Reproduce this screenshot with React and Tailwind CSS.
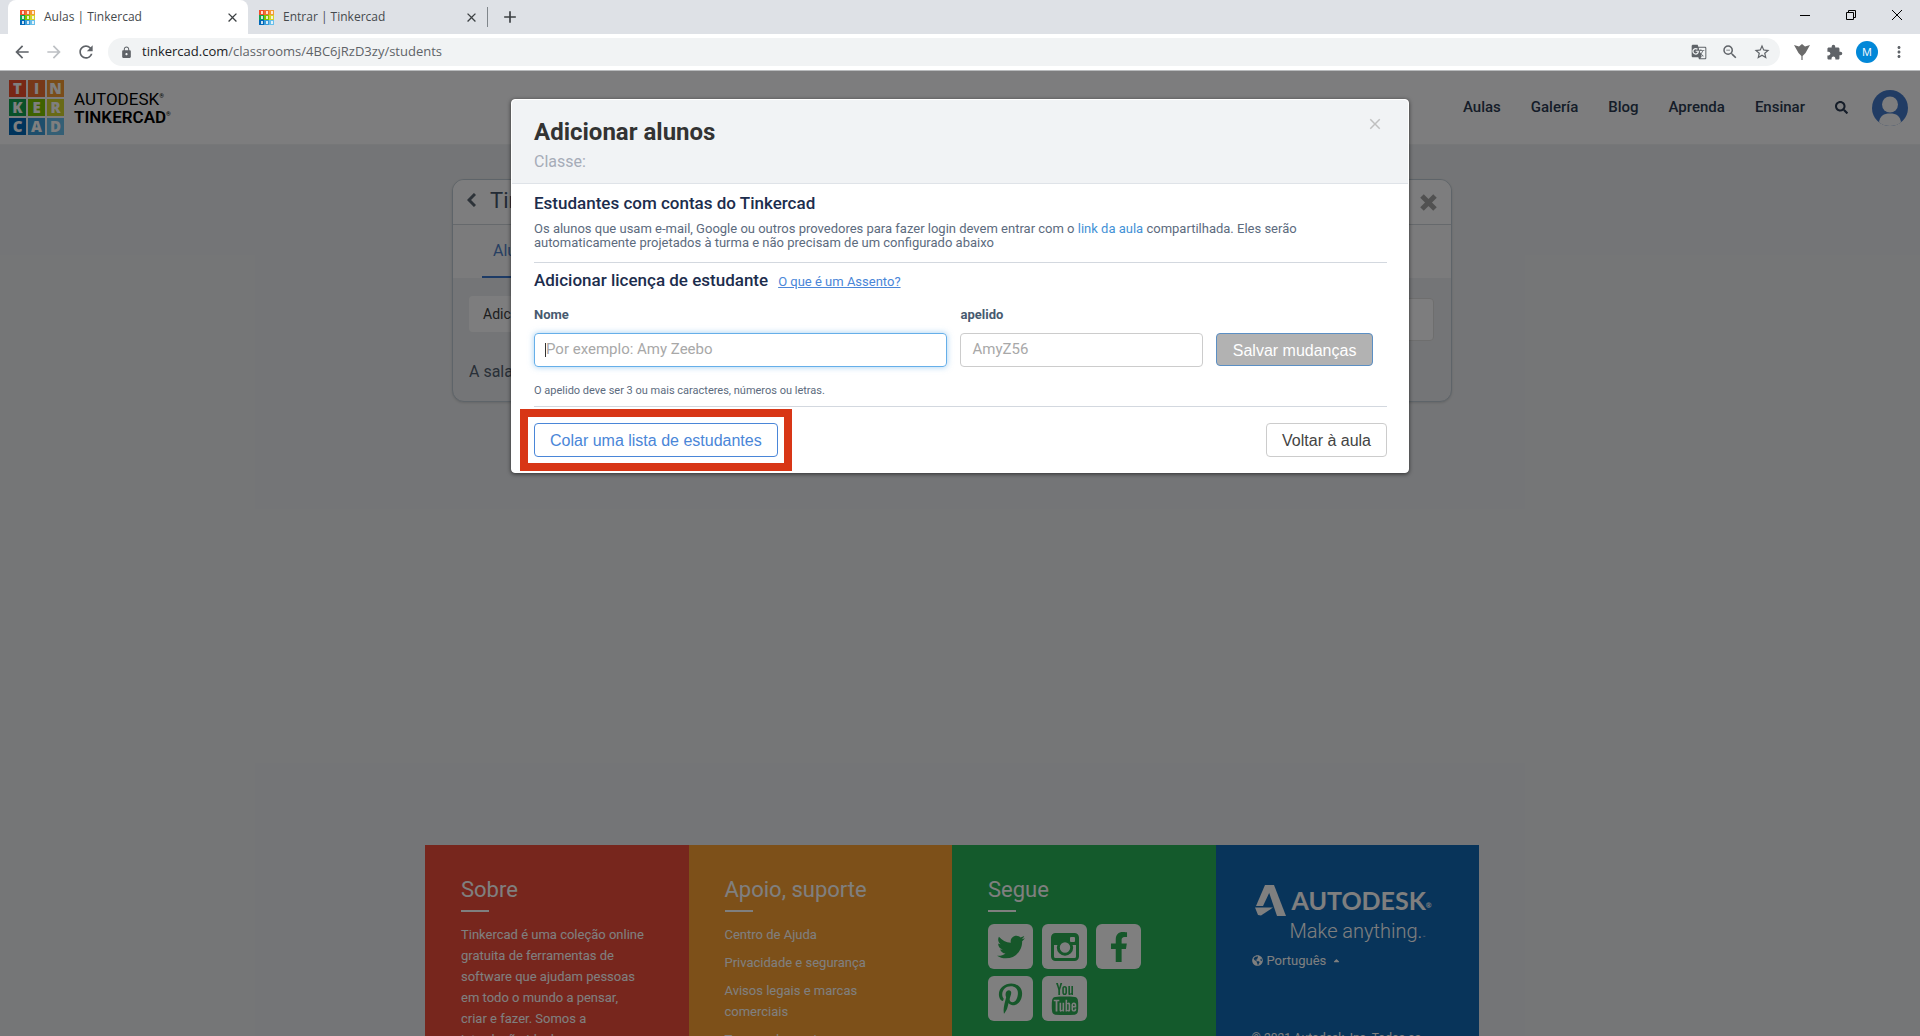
import React, { useState } from "react";
import {
  MdArrowBack,
  MdArrowForward,
  MdRefresh,
  MdLock,
  MdGTranslate,
  MdZoomOut,
  MdStarBorder,
  MdExtension,
  MdMoreVert,
  MdClose,
  MdAdd,
} from "react-icons/md";
import {
  FaSearch,
  FaTwitter,
  FaFacebookF,
  FaPinterestP,
  FaGlobeAmericas,
  FaCaretUp,
} from "react-icons/fa";
import { TfiYoutube } from "react-icons/tfi";

const TILES = [
  ["T", "bg-[#f04e2a]"],
  ["I", "bg-[#ee7030]"],
  ["N", "bg-[#f49a32]"],
  ["K", "bg-[#12a252]"],
  ["E", "bg-[#7fc400]"],
  ["R", "bg-[#d3d42c]"],
  ["C", "bg-[#0068b8]"],
  ["A", "bg-[#3a9cd8]"],
  ["D", "bg-[#68bfea]"],
];

const NAV = ["Aulas", "Galería", "Blog", "Aprenda", "Ensinar"];

function Favicon() {
  return (
    <span className="grid grid-cols-3 w-[15px] shrink-0">
      {TILES.map(([letter, bg]) => (
        <span key={letter + bg} className={`${bg} h-[5px] flex items-center justify-center`}>
          <span className="w-[2px] h-[3px] bg-white/80" />
        </span>
      ))}
    </span>
  );
}

function Logo() {
  return (
    <a href="#" className="flex items-center gap-[10px] text-black">
      <span className="grid grid-cols-[17px_17px_17px] gap-[2px]">
        {TILES.map(([letter, bg]) => (
          <span
            key={letter + bg}
            className={`${bg} h-[17px] flex items-center justify-center text-white font-['Open_Sans'] font-extrabold text-[15px] leading-none`}
          >
            {letter}
          </span>
        ))}
      </span>
      <span className="text-[17px] leading-[18px]">
        <span className="flex items-start">
          AUTODESK<span className="text-[6px] leading-[12px]">®</span>
        </span>
        <span className="flex items-start font-semibold">
          TINKERCAD<span className="text-[6px] leading-[12px]">®</span>
        </span>
      </span>
    </a>
  );
}

function Tab({ title, active }) {
  return (
    <div
      className={
        active
          ? "flex items-center w-[240px] h-full pl-3 pr-2 bg-white rounded-t-lg"
          : "flex items-center w-[239px] h-full pl-[11px] pr-2"
      }
    >
      <Favicon />
      <span className="ml-[9px] flex-1 text-[12px] text-[#45494d]">{title}</span>
      <button aria-label="Fechar aba" className="text-[#3c4043]">
        <MdClose size={15} />
      </button>
    </div>
  );
}

function BrowserBar() {
  return (
    <div className="shrink-0 font-['Open_Sans',sans-serif] bg-white border-b border-[#b9bbbd]">
      <div className="flex items-center h-[34px] bg-[#dee1e6] pl-2 pr-4">
        <Tab title="Aulas | Tinkercad" active />
        <Tab title="Entrar | Tinkercad" />
        <span className="w-px h-5 bg-[#80868b]" />
        <button aria-label="Nova aba" className="ml-3 text-[#3c4043]">
          <MdAdd size={20} />
        </button>
        <div className="ml-auto flex items-center gap-8 pb-[5px] text-black">
          <button aria-label="Minimizar">
            <svg width="14" height="14" viewBox="0 0 14 14" stroke="currentColor">
              <path d="M2 7.500h10" />
            </svg>
          </button>
          <button aria-label="Restaurar">
            <svg width="14" height="14" viewBox="0 0 14 14" fill="none" stroke="currentColor">
              <path d="M2.500 4.500h7v7h-7zM4.500 4.500v-2h7v7h-2" />
            </svg>
          </button>
          <button aria-label="Fechar">
            <svg width="14" height="14" viewBox="0 0 14 14" stroke="currentColor">
              <path d="M2 2l10 10M12 2L2 12" />
            </svg>
          </button>
        </div>
      </div>
      <div className="flex items-center h-9 px-3 text-[#5f6368]">
        <button aria-label="Voltar">
          <MdArrowBack size={20} />
        </button>
        <button aria-label="Avançar" className="ml-3 text-[#bdc0c4]">
          <MdArrowForward size={20} />
        </button>
        <button aria-label="Recarregar" className="ml-3">
          <MdRefresh size={20} />
        </button>
        <div className="flex flex-1 items-center h-7 ml-3 pl-3 pr-[9px] rounded-full bg-[#f1f3f4]">
          <MdLock size={13} />
          <span className="ml-[9px] text-[13px]">
            <span className="text-[#202124]">tinkercad.com</span>/classrooms/4BC6jRzD3zy/students
          </span>
          <div className="ml-auto flex items-center gap-[14px]">
            <MdGTranslate size={16} />
            <MdZoomOut size={18} />
            <MdStarBorder size={18} />
          </div>
        </div>
        <div className="ml-[14px] flex items-center gap-4">
          <svg width="16" height="16" viewBox="0 0 16 16" fill="#6b6b6b">
            <path d="M0 1l5 1.500L8 0l3 2.500L16 1l-4.500 8L8.600 12v4H7.400v-4L4.500 9z" />
          </svg>
          <MdExtension size={17} />
        </div>
        <span className="ml-[13px] size-[22px] rounded-full bg-[#0288d8] text-white text-[11px] flex items-center justify-center">
          M
        </span>
        <button aria-label="Menu" className="ml-3">
          <MdMoreVert size={18} />
        </button>
      </div>
    </div>
  );
}

function SiteHeader() {
  return (
    <header className="flex items-center h-[74px] shrink-0 pl-[9px] pr-3 bg-[#fbfbfc] border-b border-[#eceef0]">
      <Logo />
      <nav className="ml-auto flex items-center gap-[30px] text-[15px] font-medium text-[#2b3b52]">
        {NAV.map((item) => (
          <a key={item} href="#">
            {item}
          </a>
        ))}
        <button aria-label="Buscar">
          <FaSearch size={13} />
        </button>
      </nav>
      <svg className="ml-6" width="36" height="36" viewBox="0 0 36 36">
        <circle cx="18" cy="18" r="18" fill="#4379c8" />
        <circle cx="18" cy="14.500" r="8" fill="#fbfbfc" />
        <path d="M7 32.200C8 26 11.500 23.500 18 23.500S28 26 29 32.200C26 35 22 36 18 36S10 35 7 32.200z" fill="#fbfbfc" />
      </svg>
    </header>
  );
}

function ClassCard() {
  return (
    <section className="mx-auto w-full max-w-[1000px] h-[223px] rounded-xl border border-[#bcc8d2] bg-[#e9ebee] shadow overflow-hidden">
      <div className="flex items-center h-[45px] px-[14px] pb-1 bg-[#fbfbfc] border-b border-[#cdd2d8]">
        <button aria-label="Voltar às aulas" className="text-[#5b6673]">
          <svg width="9" height="14" viewBox="0 0 9 14" fill="none" stroke="currentColor" strokeWidth="3">
            <path d="M8 1L2 7l6 6" />
          </svg>
        </button>
        <h1 className="ml-[14px] text-[22px] text-[#46566b]">Tinkercad</h1>
        <button aria-label="Fechar" className="ml-auto mt-1 text-[#a3a3a3]">
          <svg width="17" height="17" viewBox="0 0 17 17" stroke="currentColor" strokeWidth="5">
            <path d="M2 2l13 13M15 2L2 15" />
          </svg>
        </button>
      </div>
      <div className="flex h-[53px] px-[29px] bg-[#f6f7f8]">
        <a href="#" className="flex items-center px-[11px] border-b-2 border-[#3a76cc] text-[16px] text-[#4f7fc6]">
          Alunos
        </a>
      </div>
      <div className="flex items-start justify-between pl-4 pr-[17px] mt-[18px]">
        <button className="h-9 px-[14px] rounded bg-[#fbfbfc] text-[14px] text-[#3c3c3c]">Adicionar alunos</button>
        <input aria-label="Pesquisar" className="mt-[2px] w-60 h-[43px] rounded border border-[#dcdcdc] bg-[#fbfbfc]" />
      </div>
      <p className="mt-[19px] px-4 text-[16px] text-[#525f70]">A sala de aula está vazia</p>
    </section>
  );
}

function Column({ bg, title, children }) {
  return (
    <div className={`${bg} flex-1 px-9 pt-[29px] pb-10`}>
      <h2 className="text-[22px] leading-[32px]">{title}</h2>
      <hr className="w-7 mt-1 mb-3 border-t-2 border-white" />
      {children}
    </div>
  );
}

function Social({ label, children }) {
  return (
    <a
      href="#"
      aria-label={label}
      className="flex items-center justify-center w-[45px] h-[45px] rounded-md bg-white text-[#2cae54]"
    >
      {children}
    </a>
  );
}

function Footer() {
  return (
    <footer className="mx-auto w-full max-w-[1054px] flex shrink-0 text-white text-[13px] leading-[21px]">
      <Column bg="bg-[#ee4c3a]" title="Sobre">
        <p className="w-[185px]">
          Tinkercad é uma coleção online gratuita de ferramentas de software que ajudam pessoas em todo o mundo a
          pensar, criar e fazer. Somos a introdução ideal para
        </p>
      </Column>
      <Column bg="bg-[#fba032]" title="Apoio, suporte">
        <ul className="w-40 space-y-[7px]">
          <li>
            <a href="#">Centro de Ajuda</a>
          </li>
          <li>
            <a href="#">Privacidade e segurança</a>
          </li>
          <li>
            <a href="#">Avisos legais e marcas comerciais</a>
          </li>
          <li>
            <a href="#">Termos de serviço</a>
          </li>
        </ul>
      </Column>
      <Column bg="bg-[#28b458]" title="Segue">
        <div className="grid grid-cols-[45px_45px_45px] gap-x-[9px] gap-y-[7px]">
          <Social label="Twitter">
            <FaTwitter size={28} />
          </Social>
          <Social label="Instagram">
            <svg width="28" height="28" viewBox="0 0 28 28" fill="none">
              <rect x="1.500" y="1.500" width="25" height="25" rx="3" stroke="currentColor" strokeWidth="3" />
              <path d="M1 4a3 3 0 013-3h20a3 3 0 013 3v8h-6.500a7.500 7.500 0 00-13 0H1z" fill="currentColor" />
              <circle cx="14" cy="14.500" r="6.700" fill="white" stroke="currentColor" strokeWidth="3" />
              <rect x="19" y="4" width="5" height="5" rx="1" fill="white" />
            </svg>
          </Social>
          <Social label="Facebook">
            <FaFacebookF size={30} />
          </Social>
          <Social label="Pinterest">
            <FaPinterestP size={31} />
          </Social>
          <Social label="YouTube">
            <TfiYoutube size={32} />
          </Social>
        </div>
      </Column>
      <div className="bg-[#1068b4] flex-1 px-9 pt-[39px]">
        <div className="flex items-center gap-[6px] pl-[3px]">
          <svg width="31" height="32" viewBox="0 0 31 32" fill="white">
            <path d="M10 1h8L8 22H1z" />
            <path d="M11.500 1H19l12 31h-9z" />
            <path d="M0 23.500h18L6 31.500l-3-.5z" />
          </svg>
          <span className="flex items-end font-[Lato] font-bold text-[25px] leading-[30px]">
            AUTODESK<span className="text-[7px] leading-[20px]">®</span>
          </span>
        </div>
        <p className="flex items-end pl-[38px] text-[20px] leading-[30px] font-light">
          Make anything.<span className="text-[5px] leading-[18px]">™</span>
        </p>
        <button className="mt-1 flex items-center gap-1">
          <FaGlobeAmericas size={11} />
          Português
          <FaCaretUp size={9} className="ml-[2px]" />
        </button>
        <p className="mt-[57px] text-[12px]">© 2021 Autodesk, Inc. Todos os direitos reservados</p>
      </div>
    </footer>
  );
}

function AddStudentsModal() {
  const [name, setName] = useState("");
  const [nick, setNick] = useState("");

  return (
    <div
      role="dialog"
      aria-labelledby="modal-title"
      className="w-full max-w-[898px] h-max mt-7 rounded border border-white bg-white shadow-[0_1px_4px_rgba(0,0,0,0.6)] text-[#5c6b7e]"
    >
      <div className="flex items-start justify-between pl-[22px] pr-6 pt-[15px] pb-2 rounded-t bg-[#f1f3f5] border-b border-[#dfe3e8]">
        <div>
          <h1 id="modal-title" className="text-[24px] leading-[34px] font-bold text-[#333333]">
            Adicionar alunos
          </h1>
          <p className="text-[16px] leading-[26px] text-[#a6acb8]">Classe:</p>
        </div>
        <button aria-label="Fechar" className="text-[#c0c0c0]">
          <MdClose size={18} />
        </button>
      </div>

      <div className="pl-[22px] pr-[21px] pt-[7px] pb-[15px]">
        <h2 className="text-[17px] leading-6 font-medium text-[#1c2d4d]">Estudantes com contas do Tinkercad</h2>
        <p className="mt-[7px] pr-8 text-[13px] leading-[14px]">
          Os alunos que usam e-mail, Google ou outros provedores para fazer login devem entrar com o{" "}
          <a href="#" className="text-[#4391d6]">
            link da aula
          </a>{" "}
          compartilhada. Eles serão automaticamente projetados à turma e não precisam de um configurado abaixo
        </p>
        <hr className="mt-3 border-[#d3d8df]" />

        <div className="mt-[5px] flex items-baseline gap-[10px]">
          <h2 className="text-[17px] leading-6 font-medium text-[#1c2d4d]">Adicionar licença de estudante</h2>
          <a href="#" className="text-[13px] text-[#4a86d8] underline">
            O que é um Assento?
          </a>
        </div>

        <form
          onSubmit={(e) => e.preventDefault()}
          className="mt-[13px] pr-[14px] grid grid-cols-[414fr_243fr_157fr] gap-x-[13px] gap-y-2"
        >
          <label htmlFor="nome" className="text-[13px] leading-5 font-bold text-[#475a70]">
            Nome
          </label>
          <label htmlFor="apelido" className="col-span-2 text-[13px] leading-5 font-bold text-[#475a70]">
            apelido
          </label>
          <div className="relative">
            <input
              id="nome"
              type="text"
              placeholder="Por exemplo: Amy Zeebo"
              className="w-full h-[34px] px-[11px] pb-[2px] rounded border border-[#66afe9] shadow-[0_0_6px_rgba(102,175,233,0.6)] text-[15px] placeholder:text-[#a8a8a8] outline-none"
              value={name}
              onChange={(e) => setName(e.target.value)}
            />
            <span className="absolute left-[11px] top-[10px] w-px h-[14px] bg-[#333333]" />
          </div>
          <input
            id="apelido"
            type="text"
            placeholder="AmyZ56"
            className="w-full h-[34px] px-[11px] pb-[2px] rounded border border-[#cccccc] text-[15px] placeholder:text-[#a8a8a8] outline-none"
            value={nick}
            onChange={(e) => setNick(e.target.value)}
          />
          <button className="h-[33px] pt-[2px] rounded border border-[#5b8fc4] bg-[#b2b2b2] text-white text-[16px] font-['Liberation_Sans']">
            Salvar mudanças
          </button>
        </form>

        <p className="mt-4 text-[11px] leading-4">O apelido deve ser 3 ou mais caracteres, números ou letras.</p>
        <hr className="mt-[7px] border-[#d3d8df]" />

        <div className="mt-4 flex justify-between font-['Liberation_Sans'] text-[16px]">
          <div className="relative">
            <button className="h-[34px] px-[15px] pt-[2px] rounded border border-[#4a86d8] text-[#4a86d8]">
              Colar uma lista de estudantes
            </button>
            <span className="absolute -inset-3.5 border-8 border-[#d83616] pointer-events-none" />
          </div>
          <button className="h-[34px] px-[15px] pt-[2px] rounded border border-[#cccccc] text-[#444444]">
            Voltar à aula
          </button>
        </div>
      </div>
    </div>
  );
}

export default function App() {
  return (
    <div className="h-screen flex flex-col overflow-hidden font-[Roboto,sans-serif]">
      <BrowserBar />
      <div className="relative flex-1 min-h-0 overflow-hidden bg-[#e9ebee]">
        <div className="flex flex-col">
          <SiteHeader />
          <main className="min-h-[700px] pt-[34px] pr-4">
            <ClassCard />
          </main>
          <div className="pr-4">
            <Footer />
          </div>
        </div>

        <div className="absolute inset-0 flex justify-center bg-black/50">
          <AddStudentsModal />
        </div>
      </div>
    </div>
  );
}
